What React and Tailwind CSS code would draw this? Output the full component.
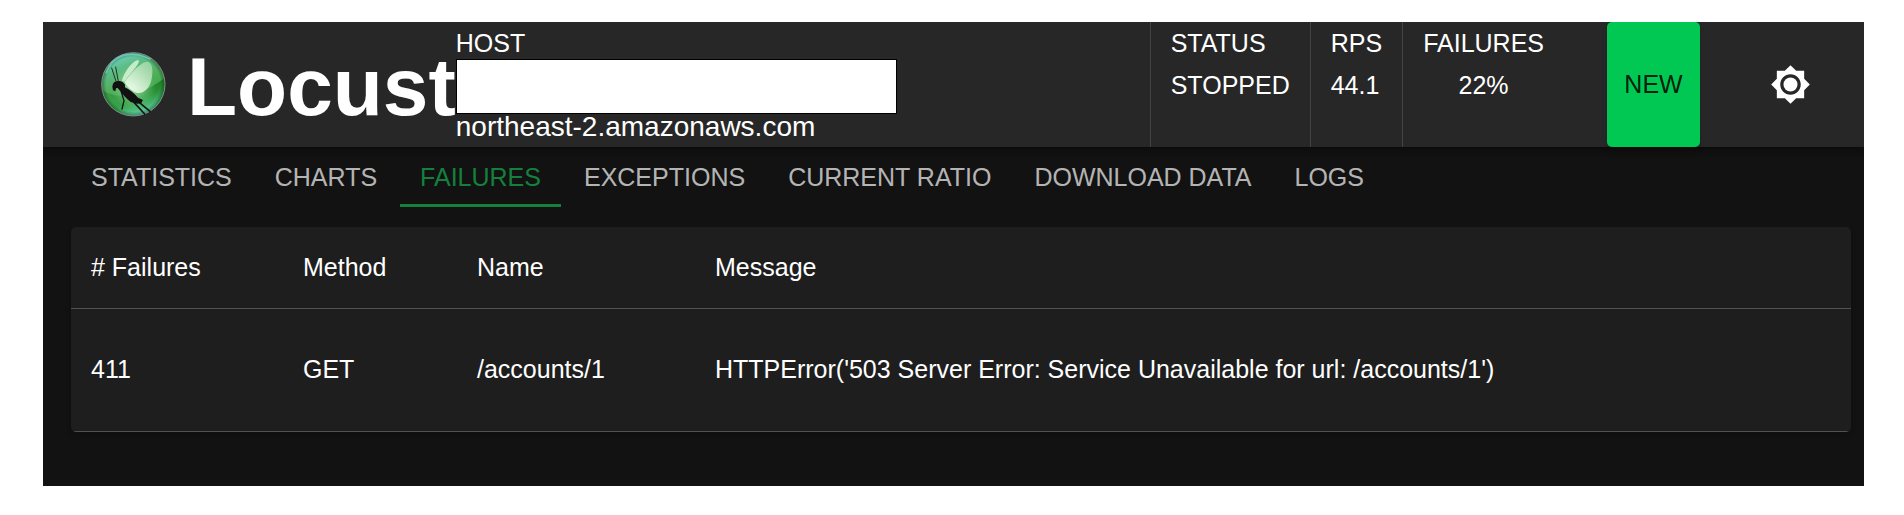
import React, { useState } from 'react';

const tabs = ['Statistics', 'Charts', 'Failures', 'Exceptions', 'Current Ratio', 'Download Data', 'Logs'];

const failures = [
    {
        occurrences: 411,
        method: 'GET',
        name: '/accounts/1',
        error: "HTTPError('503 Server Error: Service Unavailable for url: /accounts/1')"
    }
];

const LocustLogo = () => (
    <svg viewBox="33 36 195 195" className="size-[65px] shrink-0" aria-hidden="true">
        <defs>
            <linearGradient id="ball" x1="0.2" y1="0" x2="0.6" y2="1">
                <stop offset="0" stopColor="#74d6cc" />
                <stop offset="0.25" stopColor="#5cbc85" />
                <stop offset="0.5" stopColor="#52ae5c" />
                <stop offset="0.75" stopColor="#3ba548" />
                <stop offset="1" stopColor="#6ad8b4" />
            </linearGradient>
            <radialGradient id="shade" cx="0.5" cy="0.5" r="0.5">
                <stop offset="0.86" stopColor="#063a14" stopOpacity="0" />
                <stop offset="1" stopColor="#063a14" stopOpacity="0.5" />
            </radialGradient>
            <radialGradient id="glow" cx="0.5" cy="0.5" r="0.5">
                <stop offset="0" stopColor="#d9f7d2" stopOpacity="0.8" />
                <stop offset="1" stopColor="#7fd68a" stopOpacity="0" />
            </radialGradient>
            <linearGradient id="dark" x1="0" y1="0" x2="0" y2="1">
                <stop offset="0" stopColor="#0c6a12" stopOpacity="0.8" />
                <stop offset="1" stopColor="#2fa352" stopOpacity="0" />
            </linearGradient>
            <linearGradient id="wing" x1="1" y1="0" x2="0.2" y2="1">
                <stop offset="0" stopColor="#a9dcae" stopOpacity="0.8" />
                <stop offset="1" stopColor="#f2fff0" />
            </linearGradient>
        </defs>
        <circle cx="130" cy="133" r="95" fill="url(#ball)" />
        <path d="M36 150Q80 178 130 162Q185 146 224 114A95 95 0 0 1 36 150Z" fill="url(#dark)" />
        <circle cx="130" cy="140" r="68" fill="url(#glow)" />
        <circle cx="130" cy="133" r="95" fill="url(#shade)" />
        <circle cx="130" cy="133" r="95" fill="none" stroke="#7d8f88" strokeWidth="3" />
        <path d="M48 100Q62 58 100 46Q140 36 182 58" fill="none" stroke="#7fe0e4" strokeWidth="5" opacity="0.6" />
        <path d="M96 122C101 98 126 64 143 60C150 61 146 70 140 78C128 96 112 110 103 125Z" fill="#d8f3d6" opacity="0.85" />
        <path d="M104 126C120 104 150 66 172 65C189 67 190 95 184 120C178 146 162 161 142 159C126 153 112 142 104 126Z" fill="url(#wing)" opacity="0.9" />
        <g fill="none" stroke="#141414" strokeLinecap="round" strokeLinejoin="round">
            <path d="M65 84L79 127M77 81L85 124" strokeWidth="2.5" />
            <path d="M94 156L102 182L96 207" strokeWidth="4" />
            <path d="M118 172L164 222M134 176L180 214" strokeWidth="5" />
        </g>
        <path d="M69 131C73 123 88 120 99 127L105 134L105 142C120 149 133 161 144 173L159 180L154 189C146 190 141 193 134 189L122 186C109 175 97 163 88 150L83 144L78 145L76 154L69 151L67 140Z" fill="#111" />
    </svg>
);

const ThemeIcon = () => (
    <svg viewBox="0 0 24 24" className="size-[41px]" fill="currentColor" aria-hidden="true">
        <path d="M20 8.69V4h-4.69L12 .69 8.69 4H4v4.69L.69 12 4 15.31V20h4.69L12 23.31 15.31 20H20v-4.69L23.31 12 20 8.69zM12 18c-3.31 0-6-2.69-6-6s2.69-6 6-6 6 2.69 6 6-2.69 6-6 6z" />
        <circle cx="12" cy="12" r="4.1" />
    </svg>
);

const Stat = ({ label, value, className = '' }) => (
    <div className={`border-l border-[#434343] px-5 pt-1.5 leading-[31px] ${className}`}>
        <div className="uppercase">{label}</div>
        <div className="mt-[11px] uppercase">{value}</div>
    </div>
);

const Header = () => (
    <header className="relative flex items-stretch bg-[#272727] shadow-[0_2px_4px_-1px_rgba(0,0,0,0.2),0_4px_5px_rgba(0,0,0,0.14),0_1px_10px_rgba(0,0,0,0.12)]">
        <a href="#" className="ml-[58px] flex items-center gap-[21px]">
            <LocustLogo />
            <h1 className="pt-1 text-[82px] font-bold leading-none">Locust</h1>
        </a>
        <div className="pt-1.5 pb-2">
            <div className="leading-[31px]">HOST</div>
            <div className="h-[55px] w-[441px] border border-black bg-white" />
            <div className="text-[28px] leading-[25px]">northeast-2.amazonaws.com</div>
        </div>

        {/* Run stats and controls */}
        <div className="ml-auto flex items-stretch">
            <Stat label="Status" value="stopped" />
            <Stat label="RPS" value="44.1" />
            <Stat label="Failures" value="22%" className="text-center" />
            <button
                type="button"
                className="ml-[43px] w-[93px] rounded-[5px] bg-[#00c853] text-black/87 shadow-md"
            >
                NEW
            </button>
            <button type="button" aria-label="Toggle theme" className="mr-[33px] ml-[50px] self-center px-5">
                <ThemeIcon />
            </button>
        </div>
    </header>
);

const FailuresTable = () => (
    <div className="mt-5 mr-[13px] ml-7 overflow-hidden rounded-[5px] bg-[#1e1e1e] shadow-md">
        <table className="w-full text-left">
            <thead>
                <tr className="h-[81px] border-b border-[#515151]">
                    <th className="w-[212px] pl-5 font-normal"># Failures</th>
                    <th className="w-[174px] pl-5 font-normal">Method</th>
                    <th className="w-[238px] pl-5 font-normal">Name</th>
                    <th className="pl-5 font-normal">Message</th>
                </tr>
            </thead>
            <tbody>
                {failures.map((failure) => (
                    <tr key={failure.name} className="h-[123px] border-b border-[#515151]">
                        <td className="pl-5">{failure.occurrences}</td>
                        <td className="pl-5">{failure.method}</td>
                        <td className="pl-5">{failure.name}</td>
                        <td className="pl-5">{failure.error}</td>
                    </tr>
                ))}
            </tbody>
        </table>
    </div>
);

const App = () => {
    const [activeTab, setActiveTab] = useState('Failures');

    return (
        <div className="bg-white pt-[22px] pr-10 pb-[29px] pl-[43px] font-['Liberation_Sans',Arial,sans-serif] text-[25px] text-white">
            <div className="overflow-hidden bg-[#121212] pb-[54px]">
                <Header />
                <nav role="tablist" className="ml-7 flex gap-[3px]">
                    {tabs.map((tab) => (
                        <button
                            key={tab}
                            type="button"
                            role="tab"
                            aria-selected={tab === activeTab}
                            onClick={() => setActiveTab(tab)}
                            className={`border-b-3 px-5 pt-[3px] leading-[54px] whitespace-nowrap uppercase ${
                                tab === activeTab ? 'border-[#15803d] text-[#15803d]' : 'border-transparent text-white/70'
                            }`}
                        >
                            {tab}
                        </button>
                    ))}
                </nav>
                <FailuresTable />
            </div>
        </div>
    );
};

export default App;
